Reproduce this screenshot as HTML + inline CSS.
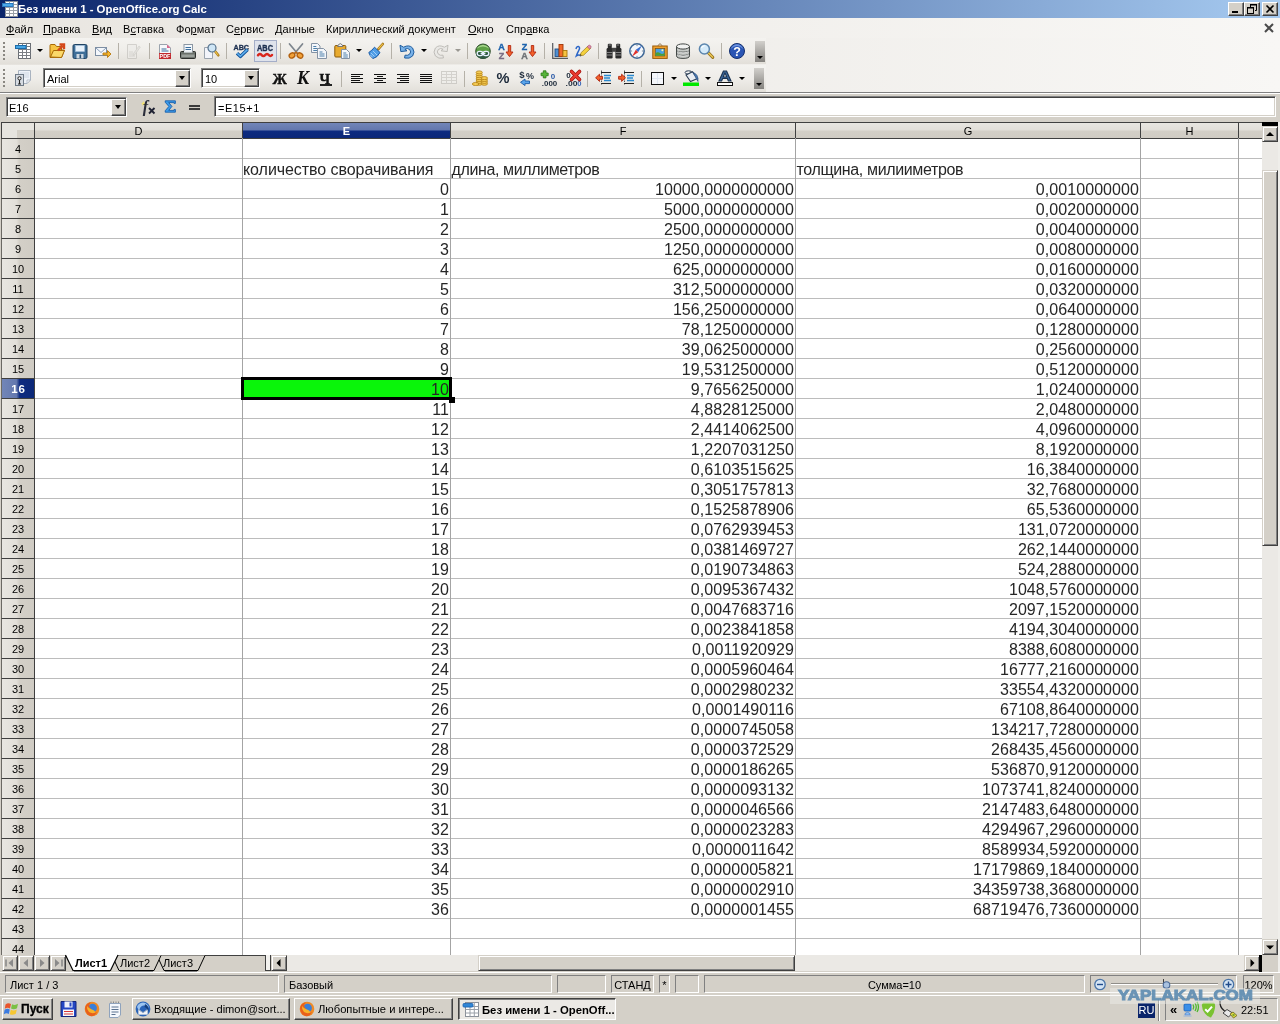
<!DOCTYPE html>
<html lang="ru"><head><meta charset="utf-8"><title>Без имени 1 - OpenOffice.org Calc</title>
<style>
*{box-sizing:border-box;margin:0;padding:0}
html,body{width:1280px;height:1024px;overflow:hidden;background:#d4d0c8;font-family:"Liberation Sans",sans-serif;font-size:11px;color:#000}
body{position:relative;will-change:transform}
div,span{position:absolute;white-space:nowrap}
svg{position:absolute;overflow:visible}
/* title bar */
#title{left:0;top:0;width:1280px;height:18px;background:linear-gradient(90deg,#0a246a,#a6caf0)}
#title .t{left:18px;top:2px;color:#fff;font-weight:bold;font-size:11.4px;line-height:14px}
.wb{top:2px;width:16px;height:14px;background:#d4d0c8;border:1px solid;border-color:#fff #404040 #404040 #fff;box-shadow:inset -1px -1px 0 #808080}
/* menubar + toolbars */
#menubar{left:0;top:18px;width:1280px;height:20px;background:linear-gradient(90deg,#e9e6e1,#f8f7f5)}
#menubar .m{top:5px;line-height:13px;font-size:11px;letter-spacing:.04px}
#menubar u{text-decoration:underline}
#tbarea{left:0;top:38px;width:1280px;height:54px;background:linear-gradient(90deg,#e6e3de,#f8f7f5)}
.tb{left:0;width:766px;height:26px;background:linear-gradient(180deg,#f4f3f0 0%,#efede9 50%,#e2dfd9 100%)}
.sep{width:1px;height:16px;background:#b5b1a8}
.grip{width:2px;height:20px;background:repeating-linear-gradient(180deg,#8a8781 0 2px,transparent 2px 4px);}
.da{width:0;height:0;border:3px solid transparent;border-top:3px solid #000;border-bottom:0}
.ic{width:16px;height:16px}
/* formula bar */
#fbar{left:0;top:92px;width:1280px;height:30px;background:#d4d0c8;border-top:1px solid #808080;box-shadow:inset 0 1px 0 #fff}
.sunk{background:#fff;border:1px solid;border-color:#808080 #fff #fff #808080;box-shadow:inset 1px 1px 0 #404040,inset -1px -1px 0 #d4d0c8}
.btn{background:#d4d0c8;border:1px solid;border-color:#fff #404040 #404040 #fff;box-shadow:inset -1px -1px 0 #808080}
/* grid */
#grid{left:0;top:0;width:1280px;height:955px;}
#gridbg{left:34px;top:138px;width:1228px;height:817px;background:#fff;
 background-image:linear-gradient(180deg,#bcbcbc 0 1px,transparent 1px);background-size:100% 20px;background-position:0 0px}
.corner{left:1px;top:122px;width:34px;height:17px;background:linear-gradient(#d3cfc7,#d3cfc7) no-repeat 15px 7px,#e6e4df;border:1px solid #404040}
.ch{top:122px;height:17px;border-top:1px solid #404040;border-bottom:1px solid #404040;border-right:1px solid #404040;background:linear-gradient(180deg,#e8e6e1 0%,#e2dfd9 45%,#d3cfc7 55%,#d0ccc4 100%);text-align:center;font-size:11px;line-height:17px;margin-left:1px}
.ch.sel{background:linear-gradient(180deg,#7286b8 0%,#6478ae 45%,#0e2b80 55%,#0c2878 100%);color:#fff;font-weight:bold}
.rh{left:1px;width:34px;height:20px;margin-top:1px;border-left:1px solid #6b6964;border-right:1px solid #404040;border-bottom:1px solid #404040;background:linear-gradient(90deg,#e8e6e1 0%,#e2dfd9 45%,#d3cfc7 55%,#d0ccc4 100%);text-align:center;font-size:11px;line-height:20px;padding-left:0}
.rh.sel{background:linear-gradient(90deg,#7286b8 0%,#6478ae 45%,#0e2b80 55%,#0c2878 100%);color:#fff;font-weight:bold;font-size:11.500px;letter-spacing:.8px;padding-left:1px}
.vl{top:138px;width:1px;height:817px;background:#a4a4a4}
.c{height:20px;line-height:20px;font-size:16px;padding-top:2px;color:#262626}
.c.r{text-align:right;letter-spacing:.07px}
.cur{left:241px;top:377px;width:211px;height:23px;background:#0af50a;border:3px solid #000}
.curh{left:449px;top:397px;width:6px;height:6px;background:#000}
.pressed{background:#dfe3ec;border:1px solid #a4aec8}
.ovf{width:10px;background:linear-gradient(180deg,#d2d0cc,#84827e)}
.ct{left:3px;top:3px;font-size:11px;line-height:14px}
.cb{right:0;top:1px;width:15px;height:17px}
.cb:after{content:"";position:absolute;left:3px;top:5px;border:3.500px solid transparent;border-top:4px solid #000;border-bottom:0}
.bi{font-family:"Liberation Serif",serif;font-size:16px;line-height:18px;color:#111}
#tabbar{left:0;top:955px;width:266px;height:16px;background:#d4d0c8;border-right:1px solid #404040}
.tbn{top:0;width:16px;height:16px}
.tab{top:1px;font-size:11px;line-height:14px}
.split{left:266px;top:955px;width:5px;height:16px;background:#f2f1ee;border-right:1px solid #404040;border-bottom:1px solid #404040}
.strack{background:#ebe9e5}
#status{left:0;top:972px;width:1280px;height:24px;background:#d4d0c8;position:absolute;border-top:1px solid #fff}
#status>*{position:absolute}
.sf{top:2px;height:18px;border:1px solid;border-color:#808080 #fff #fff #808080;font-size:11px;line-height:18px}
#status svg{top:2px}
#taskbar{position:static;height:0}
.tline{left:0;top:995px;width:1280px;height:1px;background:#fff}
.tk{top:998px;height:22px}
.tt{top:3px;font-size:11px;line-height:14px}
.tk.act{background:#ebe9e5;border:1px solid;border-color:#404040 #fff #fff #404040;box-shadow:inset 1px 1px 0 #808080}
.tk.act svg{top:3px;left:4px}.tk.act .tt{top:4px;left:23px}
.ru{left:1138px;top:1003px;width:17px;height:15px;background:#0a246a;color:#fff;font-size:11px;line-height:15px;text-align:center}
.tray{left:1165px;top:998px;width:113px;height:23px;border:1px solid;border-color:#808080 #fff #fff #808080}
.wm{left:1110px;top:988px;width:150px;height:16px;background:rgba(240,240,238,.42)}
.wm span{left:8px;top:-1.500px;font-size:14px;line-height:16px;font-weight:bold;color:#5f8db2;-webkit-text-stroke:1px #5f8db2;opacity:.92;transform-origin:0 50%;transform:scaleX(1.210)}

.sbtn{background:#d4d0c8;border:1px solid;border-color:#d4d0c8 #404040 #404040 #d4d0c8;box-shadow:inset 1px 1px 0 #fff,inset -1px -1px 0 #808080}

</style></head><body>
<div id="title"><svg style="left:2px;top:1px" width="16" height="16" viewBox="0 0 16 16"><rect x="3.500" y=".5" width="12" height="15" fill="#fff" stroke="#8a9099"/><path d="M3.500 3.500h12M3.500 6.500h12M3.500 9.500h12M3.500 12.500h12M7.500 .5v15M11.500 .5v15" stroke="#9aa0a8" fill="none"/><rect x=".5" y="2.500" width="10.500" height="3" fill="#4aa8ea" stroke="#2a78c0"/></svg><span class="t">Без имени 1 - OpenOffice.org Calc</span>
<div class="wb" style="left:1228px"><svg style="left:3px;top:8px" width="7" height="3"><rect width="6" height="2" fill="#000"/></svg></div>
<div class="wb" style="left:1244px"><svg style="left:2px;top:1px" width="11" height="11"><path d="M3.500 1H9.500V6.500H8M3.500 1V3" fill="none" stroke="#000"/><path d="M3 .5H10" stroke="#000"/><rect x=".5" y="4" width="6" height="5.500" fill="none" stroke="#000"/><path d="M0 3.500H7" stroke="#000"/></svg></div>
<div class="wb" style="left:1262px"><svg style="left:3px;top:2px" width="9" height="8"><path d="M.5 .5L7.500 7.500M7.500 .5L.5 7.500" stroke="#000" stroke-width="1.600"/></svg></div>
</div>
<div id="menubar">
<span class="m" style="left:6px"><u>Ф</u>айл</span>
<span class="m" style="left:43px"><u>П</u>равка</span>
<span class="m" style="left:92px"><u>В</u>ид</span>
<span class="m" style="left:123px">В<u>с</u>тавка</span>
<span class="m" style="left:176px">Фо<u>р</u>мат</span>
<span class="m" style="left:226px">С<u>е</u>рвис</span>
<span class="m" style="left:275px"><u>Д</u>анные</span>
<span class="m" style="left:326px">Кириллический документ</span>
<span class="m" style="left:468px"><u>О</u>кно</span>
<span class="m" style="left:506px">Спр<u>а</u>вка</span>
<svg style="left:1264px;top:5px" width="10" height="10"><path d="M1 1L9 9M9 1L1 9" stroke="#4a4a4a" stroke-width="2"/></svg>
</div>
<div id="tbarea"><div class="tb" style="top:0"></div><div class="tb" style="top:27px;height:27px"></div></div>
<div class="grip" style="left:3px;top:42px"></div>
<svg style="left:15px;top:43px" width="16" height="16" viewBox="0 0 16 16"><rect x="3.5" y=".5" width="12" height="15" fill="#fff" stroke="#6a6e74"/>
<path d="M3.5 3.5h12M3.5 6.5h12M3.5 9.5h12M3.5 12.5h12M7.5 .5v15M11.5 .5v15" stroke="#7a7e84" fill="none"/>
<rect x=".5" y="2.5" width="10.5" height="3" fill="#44a4e4" stroke="#1a6aa8"/></svg>
<div class="da" style="left:37px;top:49px"></div>
<svg style="left:49px;top:43px" width="16" height="16" viewBox="0 0 16 16"><path d="M1 14.5V2.5Q1 1.5 2 1.5H6L7.5 3.5H12.5V7H15.5L12.5 14.5Z" fill="#f6c443" stroke="#a86a08"/>
<path d="M1.5 14L4.5 7.5H15.5L12.5 14.5Z" fill="#fbd96a" stroke="#a86a08"/>
<path d="M9 7.5L13.5 3M10.5 1.5H15V6" stroke="#d4481a" stroke-width="2.4" fill="none"/></svg>
<svg style="left:72px;top:43px" width="16" height="16" viewBox="0 0 16 16"><rect x="1" y="1.5" width="14" height="14" rx="1.5" fill="#3f6f98" stroke="#1f4262"/>
<rect x="3.5" y="2.5" width="9" height="6" fill="#e8f2fb" stroke="#a9c3da" stroke-width=".6"/>
<rect x="4.5" y="11" width="7" height="4.5" fill="#cfd9e2"/><rect x="7.5" y="11.5" width="1.6" height="3.6" fill="#2b5274"/></svg>
<svg style="left:95px;top:43px" width="16" height="16" viewBox="0 0 16 16"><rect x=".5" y="4.5" width="11" height="8" fill="#f4f7fb" stroke="#7d8ea3"/>
<path d="M1 5L6 9.5L11 5" fill="none" stroke="#8aa0bb"/>
<path d="M8 10h4.5V7.5L16 11L12.5 14.5V12H8Z" fill="#f5b730" stroke="#b8790c" stroke-width=".9"/></svg>
<div class="sep" style="left:118px;top:43px"></div>
<svg style="left:125px;top:43px" width="16" height="16" viewBox="0 0 16 16"><g opacity=".55"><path d="M2.5 1.5H11.5V15.5H2.5Z" fill="#ecebe8" stroke="#b9b7b2"/>
<path d="M4 9h4M4 11h4M4 13h6" stroke="#c4c2bd"/><path d="M14 3L8.5 10.5L8 12.5L10 11.5L15.3 4Z" fill="#dedcd8" stroke="#bdbbb6" stroke-width=".8"/></g></svg>
<div class="sep" style="left:149px;top:43px"></div>
<svg style="left:157px;top:43px" width="16" height="16" viewBox="0 0 16 16"><path d="M2.5 1.5H10L13.5 5V15.5H2.5Z" fill="#f7f8fa" stroke="#9aa3ad"/>
<path d="M10 1.5L13.5 5H10Z" fill="#d9658c"/>
<path d="M4.5 6h5M4.5 8h7" stroke="#3b6f9e" stroke-width="1.2"/>
<rect x="2" y="10" width="12" height="6" fill="#c1272d"/>
<text x="8" y="15" font-family="Liberation Sans,sans-serif" font-size="5.4" font-weight="bold" fill="#fff" text-anchor="middle">PDF</text></svg>
<svg style="left:180px;top:43px" width="16" height="16" viewBox="0 0 16 16"><rect x="4" y="1.5" width="8.5" height="8" fill="#f4f8fc" stroke="#8b97a3"/>
<path d="M5.5 4.5h5.5M5.5 6.5h5.5" stroke="#3b6f9e" stroke-width="1.1"/>
<path d="M.5 9.5Q.5 8.5 1.5 8.5H14.5Q15.5 8.5 15.5 9.5V14.5Q15.5 15.5 14.5 15.5H1.5Q.5 15.5 .5 14.5Z" fill="#6b716b" stroke="#2d302d"/>
<rect x="1.5" y="11.5" width="13" height="2.6" fill="#9aa09a"/><rect x="4" y="8" width="8.5" height="1.6" fill="#e9eef3"/></svg>
<svg style="left:203px;top:43px" width="16" height="16" viewBox="0 0 16 16"><path d="M1.5 4.5H9.5V15.5H1.5Z" fill="#f2f4fa" stroke="#9aa3ad"/>
<path d="M11.5 7.5L15.3 12.3" stroke="#a77a1c" stroke-width="2.6" stroke-linecap="round"/><path d="M11.8 7.9L15 12" stroke="#f0c648" stroke-width="1.1" stroke-linecap="round"/>
<circle cx="9" cy="5" r="4" fill="#cfe6f6" stroke="#54718c" stroke-width="1.2"/></svg>
<div class="sep" style="left:226px;top:43px"></div>
<svg style="left:233px;top:43px" width="16" height="16" viewBox="0 0 16 16"><text x="8.3" y="6.6" font-family="Liberation Sans,sans-serif" font-size="7.8" font-weight="bold" fill="#1c2f50" stroke="#1c2f50" stroke-width=".35" text-anchor="middle" textLength="15.5" lengthAdjust="spacingAndGlyphs">ABC</text>
<path d="M4 10.2L7.3 13.4L14.6 6.4" fill="none" stroke="#15569c" stroke-width="3.4" stroke-linejoin="round"/><path d="M4.2 10.3L7.3 13.3L14.4 6.6" fill="none" stroke="#5fb0ee" stroke-width="1.5"/></svg>
<div class="pressed" style="left:254px;top:40px;width:23px;height:22px"></div>
<svg style="left:257px;top:43px" width="16" height="16" viewBox="0 0 16 16"><text x="8" y="8.2" font-family="Liberation Sans,sans-serif" font-size="8.6" font-weight="bold" fill="#1c2f50" stroke="#1c2f50" stroke-width=".35" text-anchor="middle" textLength="16" lengthAdjust="spacingAndGlyphs">ABC</text>
<path d="M1 12.3Q2.8 9.8 4.6 12Q6.4 14.2 8.2 12Q10 9.8 11.8 12Q13.4 14 15 12" fill="none" stroke="#d9261c" stroke-width="2.5" stroke-linecap="round"/></svg>
<div class="sep" style="left:280px;top:43px"></div>
<svg style="left:288px;top:43px" width="16" height="16" viewBox="0 0 16 16"><path d="M1.5 1L9.5 10.5M14.5 1L6.5 10.5" stroke="#7d858d" stroke-width="1.7" stroke-linecap="round"/>
<ellipse cx="4" cy="12.5" rx="3" ry="2.4" fill="#f2a239" stroke="#b25f0d" stroke-width="1.3" transform="rotate(-30 4 12.5)"/>
<ellipse cx="12" cy="12.5" rx="3" ry="2.4" fill="#f2a239" stroke="#b25f0d" stroke-width="1.3" transform="rotate(30 12 12.5)"/>
<path d="M6.3 9.8L8 8.2L9.7 9.8L8 11Z" fill="#c46a10"/></svg>
<svg style="left:311px;top:43px" width="16" height="16" viewBox="0 0 16 16"><path d="M.5 .5H6.5L9 3V9.5H.5Z" fill="#f3f6fa" stroke="#8493a5"/><path d="M2.3 3.5h3M2.3 5.5h4.6M2.3 7.5h4.6" stroke="#4b7faa" stroke-width="1"/>
<path d="M6.5 5.5H12.5L15.5 8.5V15.5H6.5Z" fill="#f3f6fa" stroke="#8493a5"/><path d="M8.5 9h3M8.5 11h5M8.5 13h5" stroke="#4b7faa" stroke-width="1"/></svg>
<svg style="left:334px;top:43px" width="16" height="16" viewBox="0 0 16 16"><rect x=".8" y="2.5" width="11" height="11.5" rx="1" fill="#e9ab2e" stroke="#8a5a0b"/>
<path d="M3.5 3.5Q3.5 1.8 6.3 .6Q9 1.8 9 3.5Z" fill="#f1f1ee" stroke="#777"/>
<path d="M7.5 6.5H12.5L15.5 9.5V15.5H7.5Z" fill="#f5f8fb" stroke="#8493a5"/><path d="M9.3 10h3M9.3 12h4.5M9.3 14h4.5" stroke="#4b7faa" stroke-width="1"/></svg>
<div class="da" style="left:356px;top:49px"></div>
<svg style="left:368px;top:43px" width="16" height="16" viewBox="0 0 16 16"><path d="M10.3 6.2L14.8 1" stroke="#a67514" stroke-width="2.6" stroke-linecap="round"/><path d="M10.6 5.6L14.6 1.2" stroke="#eec24e" stroke-width="1.1" stroke-linecap="round"/>
<path d="M6.5 4.2L12 9.5Q9.5 14.5 5 15.5Q1.5 13 .8 9.5Q4 7.5 6.5 4.2Z" fill="#4f9de6" stroke="#1a5aa6"/>
<path d="M3 10L6.5 13.5M5 8L9 12M2.2 11.8L4.6 14.4" stroke="#a9d3f8" stroke-width=".9"/></svg>
<div class="sep" style="left:391px;top:43px"></div>
<svg style="left:399px;top:43px" width="16" height="16" viewBox="0 0 16 16"><path d="M1 2.2L1.8 8.6L8 7.8L5.9 6.2Q8.6 4.6 10.8 6.6Q12.6 9 10.6 11.2Q8.8 12.8 6 12.2L5.6 15Q10.5 16.2 13.6 13Q16.4 9.2 13.6 5Q10 1.2 4.6 4.2Z" fill="#79b2e8" stroke="#1f5d9f" stroke-linejoin="round"/></svg>
<div class="da" style="left:421px;top:49px"></div>
<svg style="left:433px;top:43px" width="16" height="16" viewBox="0 0 16 16"><g opacity=".9"><path d="M15 2.2L14.2 8.6L8 7.8L10.1 6.2Q7.4 4.6 5.2 6.6Q3.4 9 5.4 11.2Q7.2 12.8 10 12.2L10.4 15Q5.5 16.2 2.4 13Q-.4 9.2 2.4 5Q6 1.2 11.4 4.2Z" fill="#e9e8e5" stroke="#b9b7b2" stroke-linejoin="round"/></g></svg>
<div class="da" style="left:455px;top:49px;border-top-color:#9a9892"></div>
<div class="sep" style="left:467px;top:43px"></div>
<svg style="left:475px;top:43px" width="16" height="16" viewBox="0 0 16 16"><circle cx="8" cy="8.3" r="7.3" fill="#5da046" stroke="#2c4a2a"/>
<path d="M2 5.5Q8 1.5 14 5.5Q13 3 8 1.8Q3 3 2 5.5Z" fill="#a7d58e"/><path d="M1.2 9.5Q4 7.5 6 9.5T11 9.5T14.8 9.5V12.5Q12 15.8 8 15.8Q4 15.8 1.2 12.5Z" fill="#2f5a43"/>
<rect x="2.2" y="8.3" width="5.6" height="4.4" rx="2.1" fill="none" stroke="#e8f0ff" stroke-width="1.3"/><rect x="8.2" y="8.3" width="5.6" height="4.4" rx="2.1" fill="none" stroke="#e8f0ff" stroke-width="1.3"/><path d="M5.6 10.5h4.8" stroke="#e8f0ff" stroke-width="1.3"/></svg>
<svg style="left:498px;top:43px" width="16" height="16" viewBox="0 0 16 16"><text x="3.4" y="7.2" font-family="Liberation Sans,sans-serif" font-size="9" font-weight="bold" fill="#1d63ad" stroke="#1d63ad" stroke-width=".4" text-anchor="middle">A</text>
<text x="3.6" y="15.6" font-family="Liberation Sans,sans-serif" font-size="9" font-weight="bold" fill="#7a6e84" stroke="#7a6e84" stroke-width=".4" text-anchor="middle">Z</text>
<path d="M10.3 2.5H12.7V9H15L11.5 13.6L8 9H10.3Z" fill="#f2602b" stroke="#b3270e" stroke-width=".9" stroke-linejoin="round"/></svg>
<svg style="left:521px;top:43px" width="16" height="16" viewBox="0 0 16 16"><text x="3.6" y="7.2" font-family="Liberation Sans,sans-serif" font-size="9" font-weight="bold" fill="#1d63ad" stroke="#1d63ad" stroke-width=".4" text-anchor="middle">Z</text>
<text x="3.4" y="15.6" font-family="Liberation Sans,sans-serif" font-size="9" font-weight="bold" fill="#6f7377" stroke="#6f7377" stroke-width=".4" text-anchor="middle">A</text>
<path d="M10.3 2.5H12.7V9H15L11.5 13.6L8 9H10.3Z" fill="#f2602b" stroke="#b3270e" stroke-width=".9" stroke-linejoin="round"/></svg>
<div class="sep" style="left:544px;top:43px"></div>
<svg style="left:552px;top:43px" width="16" height="16" viewBox="0 0 16 16"><path d="M.7 0V15.3H16" fill="none" stroke="#55595e" stroke-width="1.2"/>
<rect x="3" y="6" width="4" height="7.5" fill="#4f8fd0" stroke="#1f4f86" stroke-width=".9"/>
<rect x="7" y="1.5" width="4" height="12" fill="#f0682a" stroke="#9e3508" stroke-width=".9"/>
<rect x="11" y="7.5" width="4" height="6" fill="#f6c341" stroke="#a8760b" stroke-width=".9"/></svg>
<svg style="left:575px;top:43px" width="16" height="16" viewBox="0 0 16 16"><path d="M1 6Q1.5 3.2 3.6 3.6Q5.4 4.4 3.8 7.4Q2.4 10 1.4 12.8Q4 11 6 13" fill="none" stroke="#2b66c8" stroke-width="1.5"/>
<path d="M5 12.8L6.2 9.6L13 3L15.6 5.4L8.6 12.2Z" fill="#f5d23e" stroke="#a3862a" stroke-width=".8"/><path d="M12.2 3.8L13.6 2.4Q14.6 1.8 15.6 2.8Q16.4 3.8 15.8 4.6L14.6 6Z" fill="#e58aa8" stroke="#a45070" stroke-width=".7"/><path d="M5 12.8L5.6 11L6.6 12.2Z" fill="#333"/></svg>
<div class="sep" style="left:598px;top:43px"></div>
<svg style="left:606px;top:43px" width="16" height="16" viewBox="0 0 16 16"><rect x=".6" y="5" width="6" height="10.4" rx="1.2" fill="#2a2a2a"/><rect x="9.4" y="5" width="6" height="10.4" rx="1.2" fill="#2a2a2a"/>
<rect x="1.8" y=".8" width="4" height="5" rx="1" fill="#2a2a2a"/><rect x="10.2" y=".8" width="4" height="5" rx="1" fill="#2a2a2a"/><rect x="6" y="4.8" width="4" height="4" fill="#444"/>
<path d="M1 9.5h5.4M9.6 9.5h5.4M1 12h5.4M9.6 12h5.4" stroke="#8d8d8d" stroke-width=".9"/><path d="M2.6 2h2.2M11 2h2.2" stroke="#999" stroke-width=".9"/></svg>
<svg style="left:629px;top:43px" width="16" height="16" viewBox="0 0 16 16"><circle cx="8" cy="8" r="7.2" fill="#f3f6fa" stroke="#3d6695" stroke-width="1.5"/>
<path d="M13 2.5L9.2 9.2L6.8 6.8Z" fill="#3a6fd0"/><path d="M3 13.5L6.8 6.8L9.2 9.2Z" fill="#e0302a"/>
<path d="M8 1.5v1.6M8 12.9v1.6M1.5 8h1.6M12.9 8h1.6" stroke="#6b7f96" stroke-width=".9"/></svg>
<svg style="left:652px;top:43px" width="16" height="16" viewBox="0 0 16 16"><path d="M5.5 3L8 .6L10.5 3" fill="none" stroke="#8a6a3a" stroke-width=".9"/>
<rect x=".8" y="3" width="14.4" height="12.4" fill="#f0a22e" stroke="#9a5a08"/>
<rect x="3.2" y="5.4" width="9.6" height="7.6" fill="#4aa0e0" stroke="#7a4a08" stroke-width=".7"/>
<path d="M3.4 12.8V10.2Q6 8.2 8.2 10.2T12.6 9.4V12.8Z" fill="#4da032"/><circle cx="10.4" cy="7.3" r="1" fill="#fff6a8"/></svg>
<svg style="left:675px;top:43px" width="16" height="16" viewBox="0 0 16 16"><path d="M1.5 3.5V12.8Q1.5 15.4 8 15.4T14.5 12.8V3.5Z" fill="#c6c9c6" stroke="#434846"/>
<ellipse cx="8" cy="3.5" rx="6.5" ry="2.6" fill="#f1f2f1" stroke="#434846"/>
<path d="M1.5 6.6Q1.5 9.2 8 9.2T14.5 6.6M1.5 9.8Q1.5 12.4 8 12.4T14.5 9.8" fill="none" stroke="#434846"/>
<path d="M2 7.6Q3 9.6 8 9.8T14 7.6M2 10.8Q3 12.8 8 13T14 10.8" fill="none" stroke="#fff" stroke-width=".8" opacity=".8"/></svg>
<svg style="left:698px;top:43px" width="16" height="16" viewBox="0 0 16 16"><path d="M10 9.4L14.8 14.4" stroke="#9a7520" stroke-width="3" stroke-linecap="round"/><path d="M10.6 10L14.6 14.1" stroke="#f2cf58" stroke-width="1.3" stroke-linecap="round"/>
<circle cx="6.4" cy="6" r="5" fill="#d5ebfa" stroke="#5b85ad" stroke-width="1.5"/><path d="M3.4 5Q4.4 2.8 6.8 2.8" fill="none" stroke="#fff" stroke-width="1.1"/></svg>
<div class="sep" style="left:721px;top:43px"></div>
<svg style="left:729px;top:43px" width="16" height="16" viewBox="0 0 16 16"><circle cx="8" cy="8" r="7.5" fill="#2a55b4" stroke="#14306f"/><path d="M1.6 6Q8 .2 14.4 6Q12 1.2 8 1.2T1.6 6Z" fill="#6c93e0"/>
<text x="8" y="12.6" font-family="Liberation Sans,sans-serif" font-size="12.5" font-weight="bold" fill="#fff" text-anchor="middle">?</text></svg>
<div class="ovf" style="left:755px;top:41px;height:21px"></div>
<div class="da" style="left:757px;top:56px"></div>
<div class="grip" style="left:3px;top:69px"></div>
<svg style="left:15px;top:70px" width="16" height="16" viewBox="0 0 16 16"><path d="M3.5 .5H15.5V10L12 13.5H3.5Z" fill="#eef2f8" stroke="#a9b3c0"/><path d="M5 3h9M5 5h9M9 7h5" stroke="#c9d3e0" stroke-width=".9"/><path d="M15.5 10H12V13.500Z" fill="#fff" stroke="#a9b3c0" stroke-width=".8"/>
<rect x=".5" y="4.500" width="8" height="11" fill="#d6dbe2" stroke="#6f7a87"/><circle cx="4.500" cy="8.300" r="1.600" fill="#f4f4f4" stroke="#222" stroke-width="1"/><path d="M4.500 10V14M3 14h3" stroke="#222" stroke-width="1.1"/></svg>
<div class="sunk" style="left:43px;top:68px;width:148px;height:20px"><span class="ct">Arial</span><div class="btn cb"></div></div>
<div class="sunk" style="left:201px;top:68px;width:59px;height:20px"><span class="ct">10</span><div class="btn cb"></div></div>
<span class="bi" style="left:272.500px;top:69.500px;font-weight:bold;font-size:14.500px;-webkit-text-stroke:.35px #111">Ж</span>
<span class="bi" style="left:297px;top:69px;font-weight:bold;font-style:italic;font-size:18px">К</span>
<span class="bi" style="left:319.500px;top:69.500px;font-weight:bold;font-size:14.500px;-webkit-text-stroke:.35px #111">Ч</span><div style="left:320px;top:84px;width:12px;height:1.500px;background:#222"></div>
<div class="sep" style="left:341px;top:71px"></div>
<svg style="left:349px;top:72px" width="16" height="16" viewBox="0 0 16 16"><rect x="2" y="2" width="12" height="1" fill="#111"/><rect x="2" y="4" width="9" height="1" fill="#111"/><rect x="2" y="6" width="12" height="1" fill="#111"/><rect x="2" y="8" width="9" height="1" fill="#111"/><rect x="2" y="10" width="12" height="1" fill="#111"/></svg>
<svg style="left:372px;top:72px" width="16" height="16" viewBox="0 0 16 16"><rect x="2" y="2" width="12" height="1" fill="#111"/><rect x="5" y="4" width="6" height="1" fill="#111"/><rect x="2" y="6" width="12" height="1" fill="#111"/><rect x="5" y="8" width="6" height="1" fill="#111"/><rect x="2" y="10" width="12" height="1" fill="#111"/></svg>
<svg style="left:395px;top:72px" width="16" height="16" viewBox="0 0 16 16"><rect x="2" y="2" width="12" height="1" fill="#111"/><rect x="5" y="4" width="9" height="1" fill="#111"/><rect x="2" y="6" width="12" height="1" fill="#111"/><rect x="5" y="8" width="9" height="1" fill="#111"/><rect x="2" y="10" width="12" height="1" fill="#111"/></svg>
<svg style="left:418px;top:72px" width="16" height="16" viewBox="0 0 16 16"><rect x="2" y="2" width="12" height="1" fill="#111"/><rect x="2" y="4" width="12" height="1" fill="#111"/><rect x="2" y="6" width="12" height="1" fill="#111"/><rect x="2" y="8" width="12" height="1" fill="#111"/><rect x="2" y="10" width="12" height="1" fill="#111"/></svg>
<svg style="left:441px;top:70px" width="16" height="16" viewBox="0 0 16 16"><g opacity=".7"><rect x=".5" y="1.500" width="15" height="12" fill="#f0efec" stroke="#c2c0bb"/><path d="M.5 4.500h15M.5 7.500h15M.5 10.500h15M5.500 1.500v12M10.500 1.500v12" stroke="#c9c7c2" fill="none"/></g></svg>
<div class="sep" style="left:464px;top:71px"></div>
<svg style="left:472px;top:70px" width="16" height="16" viewBox="0 0 16 16"><ellipse cx="7.2" cy="13.8" rx="3.1" ry="1.5" fill="#f7cd55" stroke="#b07d12" stroke-width=".8"/><ellipse cx="7.2" cy="11.9" rx="3.1" ry="1.5" fill="#f7cd55" stroke="#b07d12" stroke-width=".8"/><ellipse cx="7.2" cy="10.0" rx="3.1" ry="1.5" fill="#f7cd55" stroke="#b07d12" stroke-width=".8"/><ellipse cx="7.2" cy="8.100000000000001" rx="3.1" ry="1.5" fill="#f7cd55" stroke="#b07d12" stroke-width=".8"/><ellipse cx="7.2" cy="6.200000000000001" rx="3.1" ry="1.5" fill="#f7cd55" stroke="#b07d12" stroke-width=".8"/><ellipse cx="7.2" cy="4.300000000000001" rx="3.1" ry="1.5" fill="#f7cd55" stroke="#b07d12" stroke-width=".8"/><ellipse cx="7.2" cy="2.400000000000002" rx="3.1" ry="1.5" fill="#f7cd55" stroke="#b07d12" stroke-width=".8"/><ellipse cx="12.4" cy="13.8" rx="3.1" ry="1.5" fill="#f7cd55" stroke="#b07d12" stroke-width=".8"/><ellipse cx="12.4" cy="11.9" rx="3.1" ry="1.5" fill="#f7cd55" stroke="#b07d12" stroke-width=".8"/><ellipse cx="12.4" cy="10.0" rx="3.1" ry="1.5" fill="#f7cd55" stroke="#b07d12" stroke-width=".8"/><ellipse cx="12.4" cy="8.100000000000001" rx="3.1" ry="1.5" fill="#f7cd55" stroke="#b07d12" stroke-width=".8"/><ellipse cx="3.600" cy="14" rx="3.300" ry="1.500" fill="#f7cd55" stroke="#b07d12" stroke-width=".8"/></svg>
<svg style="left:495px;top:70px" width="16" height="16" viewBox="0 0 16 16"><text x="8" y="13.300" font-family="Liberation Sans,sans-serif" font-size="14.500" font-weight="bold" fill="#1d2a3a" text-anchor="middle" textLength="13" lengthAdjust="spacingAndGlyphs">%</text></svg>
<svg style="left:518px;top:70px" width="16" height="16" viewBox="0 0 16 16"><text x="4" y="8" font-family="Liberation Sans,sans-serif" font-size="9.500" font-weight="bold" fill="#1d2a3a" text-anchor="middle">$</text>
<text x="12" y="8.500" font-family="Liberation Sans,sans-serif" font-size="9.500" font-weight="bold" fill="#1d2a3a" text-anchor="middle" textLength="8" lengthAdjust="spacingAndGlyphs">%</text>
<path d="M11.500 11H7V9L2.500 12.300L7 15.600V13.600H11.500Z" fill="#5aa5ec" stroke="#1759a6" stroke-width=".9" stroke-linejoin="round"/></svg>
<svg style="left:541px;top:70px" width="16" height="16" viewBox="0 0 16 16"><path d="M2.300 .8H5V3H7.200V5.700H5V7.900H2.300V5.700H.1V3H2.300Z" fill="#58b53a" stroke="#2a7a15" stroke-width=".8"/>
<text x="12" y="8.800" font-family="Liberation Sans,sans-serif" font-size="8" font-weight="bold" fill="#2a5aa8" text-anchor="middle">0</text>
<text x="8.500" y="15.800" font-family="Liberation Sans,sans-serif" font-size="7.600" font-weight="bold" fill="#1d2a3a" text-anchor="middle" textLength="15.500" lengthAdjust="spacingAndGlyphs">.000</text></svg>
<svg style="left:565px;top:70px" width="16" height="16" viewBox="0 0 16 16"><text x="3.400" y="7.800" font-family="Liberation Sans,sans-serif" font-size="8" font-weight="bold" fill="#1d2a3a" text-anchor="middle">0</text>
<text x="6.500" y="15.800" font-family="Liberation Sans,sans-serif" font-size="7.600" font-weight="bold" fill="#1d2a3a" text-anchor="middle" textLength="12" lengthAdjust="spacingAndGlyphs">.00</text>
<text x="14.300" y="15.800" font-family="Liberation Sans,sans-serif" font-size="7.600" font-weight="bold" fill="#3b68b8" text-anchor="middle">0</text>
<path d="M6.500 1.500L14.500 9.500M14.500 1.500L6.500 9.500" stroke="#a3120c" stroke-width="3.600" stroke-linecap="round"/><path d="M6.500 1.500L14.500 9.500M14.500 1.500L6.500 9.500" stroke="#ea3a30" stroke-width="2.200" stroke-linecap="round"/></svg>
<div class="sep" style="left:587px;top:71px"></div>
<svg style="left:595px;top:70px" width="16" height="16" viewBox="0 0 16 16"><path d="M6.500 .5V15.500" stroke="#333" stroke-width=".8" stroke-dasharray="1.500 1"/><path d="M6 2.500h10M6 13.500h10" stroke="#222" stroke-width="1.100"/><path d="M9 5.500h7M9 8h6M9 10.500h7" stroke="#2a8ad0" stroke-width="1.600"/><path d="M7.500 6.400H4.500V4.200L.6 7.800L4.500 11.400V9.200H7.500Z" fill="#f2602b" stroke="#b3270e" stroke-width=".9" stroke-linejoin="round"/></svg>
<svg style="left:618px;top:70px" width="16" height="16" viewBox="0 0 16 16"><path d="M6.500 .5V15.500" stroke="#333" stroke-width=".8" stroke-dasharray="1.500 1"/><path d="M6 2.500h10M6 13.500h10" stroke="#222" stroke-width="1.100"/><path d="M9 5.500h7M9 8h6M9 10.500h7" stroke="#2a8ad0" stroke-width="1.600"/><path d="M.6 6.400H3.600V4.200L7.500 7.800L3.600 11.400V9.200H.6Z" fill="#f2602b" stroke="#b3270e" stroke-width=".9" stroke-linejoin="round"/></svg>
<div class="sep" style="left:641px;top:71px"></div>
<svg style="left:649px;top:70px" width="16" height="16" viewBox="0 0 16 16"><rect x="2.500" y="2.500" width="12" height="12" fill="#f4f6fa" stroke="#111" stroke-width="1"/><path d="M8.500 3v11M3 8.500h11" stroke="#dfe6f0" stroke-width="1"/></svg>
<div class="da" style="left:671px;top:77px"></div>
<svg style="left:683px;top:70px" width="16" height="16" viewBox="0 0 16 16"><ellipse cx="5.500" cy="2.500" rx="3.400" ry="1.700" fill="#f4f4f4" stroke="#2c3e55" stroke-width="1"/>
<path d="M3 5L9.500 1.800L14.500 8.500L7.500 11.600Z" fill="#e9edf2" stroke="#2c3e55" stroke-width="1.100"/><path d="M10 2.500Q15.500 4 15 11.500L13 8Z" fill="#4a7bb5" stroke="#2c4f7c" stroke-width=".7"/>
<rect x="0" y="12.500" width="16" height="3.500" fill="#00e800"/></svg>
<div class="da" style="left:705px;top:77px"></div>
<svg style="left:717px;top:70px" width="16" height="16" viewBox="0 0 16 16"><text x="8" y="11.200" font-family="Liberation Sans,sans-serif" font-size="15" font-weight="bold" fill="#3f6ea5" stroke="#1c3350" stroke-width="1" text-anchor="middle" textLength="13" lengthAdjust="spacingAndGlyphs">A</text>
<rect x=".5" y="12.500" width="15" height="3" fill="#fff" stroke="#111" stroke-width="1"/></svg>
<div class="da" style="left:739px;top:77px"></div>
<div class="ovf" style="left:754px;top:68px;height:21px"></div>
<div class="da" style="left:756px;top:83px"></div>
<div id="fbar"></div>
<div class="sunk" style="left:6px;top:97px;width:121px;height:20px"><span class="ct" style="left:2px">E16</span><div class="btn cb"></div></div>
<svg style="left:140px;top:99px" width="16" height="16" viewBox="0 0 16 16"><path d="M3.500 2L4.300 3.700L6 4L4.600 5L5 6.800L3.500 5.800L2 6.800L2.400 5L1 4L2.700 3.700Z" fill="#f6e46a" opacity=".9"/>
<text x="5.500" y="13" font-family="Liberation Serif,serif" font-size="16" font-style="italic" font-weight="bold" fill="#2a2d3a" text-anchor="middle">f</text>
<path d="M9 9L14.500 14.500M14.500 9L9 14.500" stroke="#1f2233" stroke-width="1.900"/></svg>
<svg style="left:163px;top:100px" width="15" height="13" viewBox="0 0 16 16"><path d="M1.500 1H14V4.200H12.400V3.200H5.800L9.800 7.900L5.800 12.800H12.400V11.600H14V15H1.500V13.200L6 7.900L1.500 2.800Z" fill="#3c9be8" stroke="#0d56a8" stroke-width="1" stroke-linejoin="round"/></svg>
<div style="left:189px;top:105px;width:11px;height:1.500px;background:#3a3a3a"></div><div style="left:189px;top:108px;width:11px;height:1.500px;background:#3a3a3a"></div>
<div class="sunk" style="left:214px;top:96px;width:1062px;height:21px"><span class="ct" style="left:3px;top:4px;letter-spacing:.55px">=E15+1</span></div>
<div id="gridbg"></div>
<div id="grid">
<div class="corner"></div>
<div class="ch" style="left:34px;width:208px">D</div>
<div class="ch sel" style="left:242px;width:208px">E</div>
<div class="ch" style="left:450px;width:345px">F</div>
<div class="ch" style="left:795px;width:345px">G</div>
<div class="ch" style="left:1140px;width:98px">H</div>
<div class="ch" style="left:1238px;width:24px"></div>
<div class="rh" style="top:138px">4</div>
<div class="rh" style="top:158px">5</div>
<div class="rh" style="top:178px">6</div>
<div class="rh" style="top:198px">7</div>
<div class="rh" style="top:218px">8</div>
<div class="rh" style="top:238px">9</div>
<div class="rh" style="top:258px">10</div>
<div class="rh" style="top:278px">11</div>
<div class="rh" style="top:298px">12</div>
<div class="rh" style="top:318px">13</div>
<div class="rh" style="top:338px">14</div>
<div class="rh" style="top:358px">15</div>
<div class="rh sel" style="top:378px">16</div>
<div class="rh" style="top:398px">17</div>
<div class="rh" style="top:418px">18</div>
<div class="rh" style="top:438px">19</div>
<div class="rh" style="top:458px">20</div>
<div class="rh" style="top:478px">21</div>
<div class="rh" style="top:498px">22</div>
<div class="rh" style="top:518px">23</div>
<div class="rh" style="top:538px">24</div>
<div class="rh" style="top:558px">25</div>
<div class="rh" style="top:578px">26</div>
<div class="rh" style="top:598px">27</div>
<div class="rh" style="top:618px">28</div>
<div class="rh" style="top:638px">29</div>
<div class="rh" style="top:658px">30</div>
<div class="rh" style="top:678px">31</div>
<div class="rh" style="top:698px">32</div>
<div class="rh" style="top:718px">33</div>
<div class="rh" style="top:738px">34</div>
<div class="rh" style="top:758px">35</div>
<div class="rh" style="top:778px">36</div>
<div class="rh" style="top:798px">37</div>
<div class="rh" style="top:818px">38</div>
<div class="rh" style="top:838px">39</div>
<div class="rh" style="top:858px">40</div>
<div class="rh" style="top:878px">41</div>
<div class="rh" style="top:898px">42</div>
<div class="rh" style="top:918px">43</div>
<div class="rh" style="top:938px">44</div>
<div class="vl" style="left:242px"></div>
<div class="vl" style="left:450px"></div>
<div class="vl" style="left:795px"></div>
<div class="vl" style="left:1140px"></div>
<div class="vl" style="left:1238px"></div>
<div class="c l" style="top:158px;left:243px;letter-spacing:-.06px">количество сворачивания</div>
<div class="c l" style="top:158px;left:451.500px;letter-spacing:-.38px">длина, миллиметров</div>
<div class="c l" style="top:158px;left:796.500px;letter-spacing:-.36px">толщина, милииметров</div>
<div class="c r" style="top:178px;left:243px;width:206px">0</div>
<div class="c r" style="top:178px;left:451px;width:343px">10000,0000000000</div>
<div class="c r" style="top:178px;left:796px;width:343px">0,0010000000</div>
<div class="c r" style="top:198px;left:243px;width:206px">1</div>
<div class="c r" style="top:198px;left:451px;width:343px">5000,0000000000</div>
<div class="c r" style="top:198px;left:796px;width:343px">0,0020000000</div>
<div class="c r" style="top:218px;left:243px;width:206px">2</div>
<div class="c r" style="top:218px;left:451px;width:343px">2500,0000000000</div>
<div class="c r" style="top:218px;left:796px;width:343px">0,0040000000</div>
<div class="c r" style="top:238px;left:243px;width:206px">3</div>
<div class="c r" style="top:238px;left:451px;width:343px">1250,0000000000</div>
<div class="c r" style="top:238px;left:796px;width:343px">0,0080000000</div>
<div class="c r" style="top:258px;left:243px;width:206px">4</div>
<div class="c r" style="top:258px;left:451px;width:343px">625,0000000000</div>
<div class="c r" style="top:258px;left:796px;width:343px">0,0160000000</div>
<div class="c r" style="top:278px;left:243px;width:206px">5</div>
<div class="c r" style="top:278px;left:451px;width:343px">312,5000000000</div>
<div class="c r" style="top:278px;left:796px;width:343px">0,0320000000</div>
<div class="c r" style="top:298px;left:243px;width:206px">6</div>
<div class="c r" style="top:298px;left:451px;width:343px">156,2500000000</div>
<div class="c r" style="top:298px;left:796px;width:343px">0,0640000000</div>
<div class="c r" style="top:318px;left:243px;width:206px">7</div>
<div class="c r" style="top:318px;left:451px;width:343px">78,1250000000</div>
<div class="c r" style="top:318px;left:796px;width:343px">0,1280000000</div>
<div class="c r" style="top:338px;left:243px;width:206px">8</div>
<div class="c r" style="top:338px;left:451px;width:343px">39,0625000000</div>
<div class="c r" style="top:338px;left:796px;width:343px">0,2560000000</div>
<div class="c r" style="top:358px;left:243px;width:206px">9</div>
<div class="c r" style="top:358px;left:451px;width:343px">19,5312500000</div>
<div class="c r" style="top:358px;left:796px;width:343px">0,5120000000</div>
<div class="cur"></div><div class="curh"></div>
<div class="c r" style="top:378px;left:243px;width:206px">10</div>
<div class="c r" style="top:378px;left:451px;width:343px">9,7656250000</div>
<div class="c r" style="top:378px;left:796px;width:343px">1,0240000000</div>
<div class="c r" style="top:398px;left:243px;width:206px">11</div>
<div class="c r" style="top:398px;left:451px;width:343px">4,8828125000</div>
<div class="c r" style="top:398px;left:796px;width:343px">2,0480000000</div>
<div class="c r" style="top:418px;left:243px;width:206px">12</div>
<div class="c r" style="top:418px;left:451px;width:343px">2,4414062500</div>
<div class="c r" style="top:418px;left:796px;width:343px">4,0960000000</div>
<div class="c r" style="top:438px;left:243px;width:206px">13</div>
<div class="c r" style="top:438px;left:451px;width:343px">1,2207031250</div>
<div class="c r" style="top:438px;left:796px;width:343px">8,1920000000</div>
<div class="c r" style="top:458px;left:243px;width:206px">14</div>
<div class="c r" style="top:458px;left:451px;width:343px">0,6103515625</div>
<div class="c r" style="top:458px;left:796px;width:343px">16,3840000000</div>
<div class="c r" style="top:478px;left:243px;width:206px">15</div>
<div class="c r" style="top:478px;left:451px;width:343px">0,3051757813</div>
<div class="c r" style="top:478px;left:796px;width:343px">32,7680000000</div>
<div class="c r" style="top:498px;left:243px;width:206px">16</div>
<div class="c r" style="top:498px;left:451px;width:343px">0,1525878906</div>
<div class="c r" style="top:498px;left:796px;width:343px">65,5360000000</div>
<div class="c r" style="top:518px;left:243px;width:206px">17</div>
<div class="c r" style="top:518px;left:451px;width:343px">0,0762939453</div>
<div class="c r" style="top:518px;left:796px;width:343px">131,0720000000</div>
<div class="c r" style="top:538px;left:243px;width:206px">18</div>
<div class="c r" style="top:538px;left:451px;width:343px">0,0381469727</div>
<div class="c r" style="top:538px;left:796px;width:343px">262,1440000000</div>
<div class="c r" style="top:558px;left:243px;width:206px">19</div>
<div class="c r" style="top:558px;left:451px;width:343px">0,0190734863</div>
<div class="c r" style="top:558px;left:796px;width:343px">524,2880000000</div>
<div class="c r" style="top:578px;left:243px;width:206px">20</div>
<div class="c r" style="top:578px;left:451px;width:343px">0,0095367432</div>
<div class="c r" style="top:578px;left:796px;width:343px">1048,5760000000</div>
<div class="c r" style="top:598px;left:243px;width:206px">21</div>
<div class="c r" style="top:598px;left:451px;width:343px">0,0047683716</div>
<div class="c r" style="top:598px;left:796px;width:343px">2097,1520000000</div>
<div class="c r" style="top:618px;left:243px;width:206px">22</div>
<div class="c r" style="top:618px;left:451px;width:343px">0,0023841858</div>
<div class="c r" style="top:618px;left:796px;width:343px">4194,3040000000</div>
<div class="c r" style="top:638px;left:243px;width:206px">23</div>
<div class="c r" style="top:638px;left:451px;width:343px">0,0011920929</div>
<div class="c r" style="top:638px;left:796px;width:343px">8388,6080000000</div>
<div class="c r" style="top:658px;left:243px;width:206px">24</div>
<div class="c r" style="top:658px;left:451px;width:343px">0,0005960464</div>
<div class="c r" style="top:658px;left:796px;width:343px">16777,2160000000</div>
<div class="c r" style="top:678px;left:243px;width:206px">25</div>
<div class="c r" style="top:678px;left:451px;width:343px">0,0002980232</div>
<div class="c r" style="top:678px;left:796px;width:343px">33554,4320000000</div>
<div class="c r" style="top:698px;left:243px;width:206px">26</div>
<div class="c r" style="top:698px;left:451px;width:343px">0,0001490116</div>
<div class="c r" style="top:698px;left:796px;width:343px">67108,8640000000</div>
<div class="c r" style="top:718px;left:243px;width:206px">27</div>
<div class="c r" style="top:718px;left:451px;width:343px">0,0000745058</div>
<div class="c r" style="top:718px;left:796px;width:343px">134217,7280000000</div>
<div class="c r" style="top:738px;left:243px;width:206px">28</div>
<div class="c r" style="top:738px;left:451px;width:343px">0,0000372529</div>
<div class="c r" style="top:738px;left:796px;width:343px">268435,4560000000</div>
<div class="c r" style="top:758px;left:243px;width:206px">29</div>
<div class="c r" style="top:758px;left:451px;width:343px">0,0000186265</div>
<div class="c r" style="top:758px;left:796px;width:343px">536870,9120000000</div>
<div class="c r" style="top:778px;left:243px;width:206px">30</div>
<div class="c r" style="top:778px;left:451px;width:343px">0,0000093132</div>
<div class="c r" style="top:778px;left:796px;width:343px">1073741,8240000000</div>
<div class="c r" style="top:798px;left:243px;width:206px">31</div>
<div class="c r" style="top:798px;left:451px;width:343px">0,0000046566</div>
<div class="c r" style="top:798px;left:796px;width:343px">2147483,6480000000</div>
<div class="c r" style="top:818px;left:243px;width:206px">32</div>
<div class="c r" style="top:818px;left:451px;width:343px">0,0000023283</div>
<div class="c r" style="top:818px;left:796px;width:343px">4294967,2960000000</div>
<div class="c r" style="top:838px;left:243px;width:206px">33</div>
<div class="c r" style="top:838px;left:451px;width:343px">0,0000011642</div>
<div class="c r" style="top:838px;left:796px;width:343px">8589934,5920000000</div>
<div class="c r" style="top:858px;left:243px;width:206px">34</div>
<div class="c r" style="top:858px;left:451px;width:343px">0,0000005821</div>
<div class="c r" style="top:858px;left:796px;width:343px">17179869,1840000000</div>
<div class="c r" style="top:878px;left:243px;width:206px">35</div>
<div class="c r" style="top:878px;left:451px;width:343px">0,0000002910</div>
<div class="c r" style="top:878px;left:796px;width:343px">34359738,3680000000</div>
<div class="c r" style="top:898px;left:243px;width:206px">36</div>
<div class="c r" style="top:898px;left:451px;width:343px">0,0000001455</div>
<div class="c r" style="top:898px;left:796px;width:343px">68719476,7360000000</div>
</div>
<div id="tabbar">
<div class="sbtn tbn" style="left:2px"><svg width="14" height="14" viewBox="0 0 14 14" style="left:0;top:0"><path d="M3 3.500v7" stroke="#8a8a8a" stroke-width="1.600"/><path d="M10 3L5.500 7L10 11Z" fill="#8a8a8a"/></svg></div>
<div class="sbtn tbn" style="left:18px"><svg width="14" height="14" viewBox="0 0 14 14" style="left:0;top:0"><path d="M9 3L4.500 7L9 11Z" fill="#8a8a8a"/></svg></div>
<div class="sbtn tbn" style="left:34px"><svg width="14" height="14" viewBox="0 0 14 14" style="left:0;top:0"><path d="M5 3L9.500 7L5 11Z" fill="#8a8a8a"/></svg></div>
<div class="sbtn tbn" style="left:50px"><svg width="14" height="14" viewBox="0 0 14 14" style="left:0;top:0"><path d="M11 3.500v7" stroke="#8a8a8a" stroke-width="1.600"/><path d="M4 3L8.500 7L4 11Z" fill="#8a8a8a"/></svg></div>
<svg style="left:64px;top:0" width="204" height="17" viewBox="64 955 204 17">
<path d="M118 955.500H265.500" stroke="#404040" fill="none"/>
<path d="M157 955.500L164 970.500H198L205 955.500" fill="#d4d0c8" stroke="#000"/>
<path d="M112 955.500L119 970.500H154L161 955.500" fill="#d4d0c8" stroke="#000"/>
<path d="M65.500 955L73 970.500H110.500L118 955" fill="#fff" stroke="#000" stroke-width="1.200"/>
<path d="M74 971.500H110M120 971.500H153M165 971.500H197" stroke="#808080" fill="none"/>
</svg>
<span class="tab" style="left:75px;font-weight:bold">Лист1</span><span class="tab" style="left:120px">Лист2</span><span class="tab" style="left:163px">Лист3</span>
</div>
<div class="split"></div>
<div class="strack" style="left:271px;top:955px;width:989px;height:16px"></div>
<div class="sbtn" style="left:271px;top:955px;width:16px;height:16px"><svg width="14" height="14" style="left:0;top:0"><path d="M8.500 3L4.500 7L8.500 11Z" fill="#000"/></svg></div>
<div class="sbtn" style="left:478px;top:955px;width:317px;height:16px"></div>
<div class="sbtn" style="left:1244px;top:955px;width:16px;height:16px"><svg width="14" height="14" style="left:0;top:0"><path d="M5.500 3L9.500 7L5.500 11Z" fill="#000"/></svg></div>
<div style="left:1259px;top:955px;width:3px;height:17px;background:#000"></div>
<div class="strack" style="left:1262px;top:122px;width:16px;height:833px"></div>
<div style="left:1262px;top:122px;width:16px;height:4px;background:#000"></div>
<div class="sbtn" style="left:1262px;top:126px;width:16px;height:16px"><svg width="14" height="14" style="left:0;top:0"><path d="M3 9L7 5L11 9Z" fill="#000"/></svg></div>
<div class="sbtn" style="left:1262px;top:170px;width:16px;height:376px"></div>
<div class="sbtn" style="left:1262px;top:939px;width:16px;height:16px"><svg width="14" height="14" style="left:0;top:0"><path d="M3 5.500L7 9.500L11 5.500Z" fill="#000"/></svg></div>
<div style="left:1262px;top:955px;width:18px;height:17px;background:#d4d0c8"></div>
<div style="left:1278px;top:122px;width:2px;height:850px;background:#efeeea"></div>
<div id="status">
<div class="sf" style="left:5px;width:274px;padding-left:4px;">Лист 1 / 3</div>
<div class="sf" style="left:284px;width:268px;padding-left:4px;">Базовый</div>
<div class="sf" style="left:557px;width:49px;padding-left:4px;"></div>
<div class="sf" style="left:611px;width:43px;text-align:center;">СТАНД</div>
<div class="sf" style="left:659px;width:11px;text-align:center;">*</div>
<div class="sf" style="left:675px;width:24px;padding-left:4px;"></div>
<div class="sf" style="left:704px;width:381px;text-align:center;">Сумма=10</div>
<div class="sf" style="left:1090px;width:147px;padding-left:4px;"></div>
<div class="sf" style="left:1243px;width:31px;text-align:center;">120%</div>
<svg style="left:1090px;top:2px" width="147" height="17" viewBox="1090 975 147 17">
<path d="M1111 983.500H1218" stroke="#8f8d88"/><path d="M1111 984.500H1218" stroke="#fff"/>
<path d="M1163.500 979V985" stroke="#404040"/>
<circle cx="1100" cy="984.500" r="5.200" fill="#d4e4f4" stroke="#4a74a8" stroke-width="1.300"/><path d="M1097 984.500h6" stroke="#1f4a8a" stroke-width="1.400"/>
<circle cx="1228.500" cy="984.500" r="5.200" fill="#d4e4f4" stroke="#4a74a8" stroke-width="1.300"/><path d="M1225.500 984.500h6M1228.500 981.500v6" stroke="#1f4a8a" stroke-width="1.400"/>
<circle cx="1166.500" cy="985" r="3.300" fill="#a9c2e0" stroke="#4a6a98" stroke-width="1.100"/>
</svg>
</div>
<div class="tline"></div><div id="taskbar">
<div class="btn tk" style="left:2px;width:51px"><svg style="left:1px;top:2px" width="16" height="16" viewBox="0 0 16 16"><path d="M1.500 3.500Q4 1.500 7 3L6 7.500Q3.500 6 .8 7.800Z" fill="#e8542c"/><path d="M8 3.200Q11 4.800 14 2.800L13 7.300Q10 9 7 7.600Z" fill="#7ac043"/><path d="M.6 8.800Q3.300 7 5.800 8.500L4.800 13Q2.500 11.500 -.2 13.200Z" fill="#3b7be0"/><path d="M6.800 8.800Q9.800 10.200 12.800 8.400L11.800 12.800Q8.800 14.600 5.800 13.200Z" fill="#f6c732"/></svg><span style="left:18px;top:3px;font-weight:bold;font-size:12px;line-height:14px;-webkit-text-stroke:.3px #000">Пуск</span></div>
<svg style="left:60px;top:1001px" width="17" height="16" viewBox="0 0 17 16"><path d="M1 .5H16V15.500H1Z" fill="#2446c4" stroke="#15267a"/><rect x="4.500" y=".5" width="8" height="6" fill="#eef1fa"/><rect x="9.500" y="1.500" width="2" height="4" fill="#2446c4"/><rect x="3" y="8.500" width="11" height="6.500" fill="#f8f8fb"/><path d="M4 10.500h9M4 13h9" stroke="#d83a3a" stroke-width="1"/></svg>
<svg style="left:84px;top:1001px" width="16" height="16" viewBox="0 0 16 16"><circle cx="8" cy="8" r="7.300" fill="#f08a24"/><circle cx="8.600" cy="7" r="4.300" fill="#3a7fd8"/><path d="M1 7Q2 2 7 1.200Q4.500 3.500 5.500 6Q7.500 7.500 7 10Q9 12.500 13 11Q11 15.300 7 15.200Q1.500 14 1 7Z" fill="#e8601c"/><path d="M3 5Q5 8 8 8.500Q10.500 9 11.500 11.500Q8 13 5 11Q2.500 8.500 3 5Z" fill="#f6b32a"/></svg>
<svg style="left:108px;top:1001px" width="14" height="17" viewBox="0 0 14 17"><path d="M1.500 2.500H12.500V14L10 16.500H1.500Z" fill="#f4f7fc" stroke="#8fa3bd"/><path d="M3 2v-1.500M5.500 2v-1.500M8 2v-1.500M10.500 2v-1.500" stroke="#8a8a8a"/><path d="M3.500 6h7M3.500 8.500h7M3.500 11h7M3.500 13.500h4" stroke="#5a7290" stroke-width="1"/></svg>
<div class="btn tk" style="left:132px;width:158px"><svg style="left:2px;top:2px" width="16" height="16" viewBox="0 0 16 16"><circle cx="8" cy="8" r="7.400" fill="#2a64b8"/><path d="M2 6Q3 2 8 1.500Q13 2 14 7Q12 4 8.500 4.500Q5 5 4.500 9Q3 8.500 2 6Z" fill="#9cc4f0"/><path d="M3.500 8.500L8 12L12.500 8.500V13.500H3.500Z" fill="#f2f4f8" stroke="#c4ccd8" stroke-width=".6"/><path d="M3.500 8.500L8 11.500L12.500 8.500" fill="none" stroke="#9aa8bc" stroke-width=".8"/><path d="M10 3Q14.500 5 13.500 11Q12.500 7 9.500 6Z" fill="#16407e"/></svg><span class="tt" style="left:21px;font-size:11.100px">Входящие - dimon@sort...</span></div>
<div class="btn tk" style="left:294px;width:159px"><svg style="left:4px;top:2px" width="16" height="16" viewBox="0 0 16 16"><circle cx="8" cy="8" r="7.300" fill="#f08a24"/><circle cx="8.600" cy="7" r="4.300" fill="#3a7fd8"/><path d="M1 7Q2 2 7 1.200Q4.500 3.500 5.500 6Q7.500 7.500 7 10Q9 12.500 13 11Q11 15.300 7 15.200Q1.500 14 1 7Z" fill="#e8601c"/><path d="M3 5Q5 8 8 8.500Q10.500 9 11.500 11.500Q8 13 5 11Q2.500 8.500 3 5Z" fill="#f6b32a"/></svg><span class="tt" style="left:23px;font-size:11.200px">Любопытные и интере...</span></div>
<div class="tk act" style="left:458px;width:158px"><svg style="left:4px;top:2px" width="16" height="16" viewBox="0 0 16 16"><rect x="2.500" y="1.500" width="13" height="14" fill="#fff" stroke="#8a9099"/><path d="M2.500 5.500h13M2.500 8.500h13M2.500 12h13M7 1.500v14M11.300 1.500v14" stroke="#9aa0a8" fill="none"/><rect x="0" y="2.500" width="10" height="3.600" rx="1" fill="#2f86d6" stroke="#1b62b0" stroke-width=".8"/></svg><span class="tt" style="left:23px;font-weight:bold;font-size:11.300px">Без имени 1 - OpenOff...</span></div>
<div class="ru">RU</div>
<div style="left:1158px;top:999px;width:2px;height:22px;border-left:1px solid #808080;border-right:1px solid #fff"></div>
<div class="tray"></div>
<span style="left:1170px;top:1003px;font-size:13px;font-weight:bold;line-height:14px">«</span>
<svg style="left:1182px;top:1001px" width="18" height="17" viewBox="0 0 18 17"><rect x="2" y="3" width="7" height="7" rx="1" fill="#3b8fe8" stroke="#1b5fb8" stroke-width=".8"/><path d="M3 12.500Q5.500 10 8 12.500V14H3Z" fill="#8fc0f4" stroke="#4a80c8" stroke-width=".7"/><path d="M1.500 15h8" stroke="#a0b8d8" stroke-width="1.300"/><path d="M11 3.500Q12.500 6 11 8.500M13 2Q15.500 6 13 10M15 .8Q18 6 15 11" fill="none" stroke="#4cb82c" stroke-width="1.300"/></svg>
<svg style="left:1201px;top:1002px" width="15" height="16" viewBox="0 0 15 16"><path d="M2 .8H13Q14.500 2 14 6Q13.500 11 10 15.500Q6 14.500 4 11.500Q1 8 .8 3Z" fill="#7ac231"/><path d="M4.200 7.200L6.600 9.600L11 4.600" fill="none" stroke="#fff" stroke-width="2"/></svg>
<svg style="left:1218px;top:1000px" width="20" height="20" viewBox="0 0 20 20"><path d="M2 1Q1.500 7 6 10.500Q9 12.500 12 12" fill="none" stroke="#222" stroke-width="1.300"/><path d="M5 13L9 9.500L14.500 13L10.500 17Z" fill="#e8e8e8" stroke="#333" stroke-width=".9"/><path d="M12 14L15 12L19 15.500L15.500 18Z" fill="#e8d84a" stroke="#6a6a1a" stroke-width=".8"/><circle cx="15.500" cy="15" r="1.200" fill="#7aa82a"/></svg>
<span style="left:1241px;top:1003px;font-size:11px;line-height:14px">22:51</span>
</div>
<div class="wm"><span>YAPLAKAL.COM</span></div>
</body></html>
